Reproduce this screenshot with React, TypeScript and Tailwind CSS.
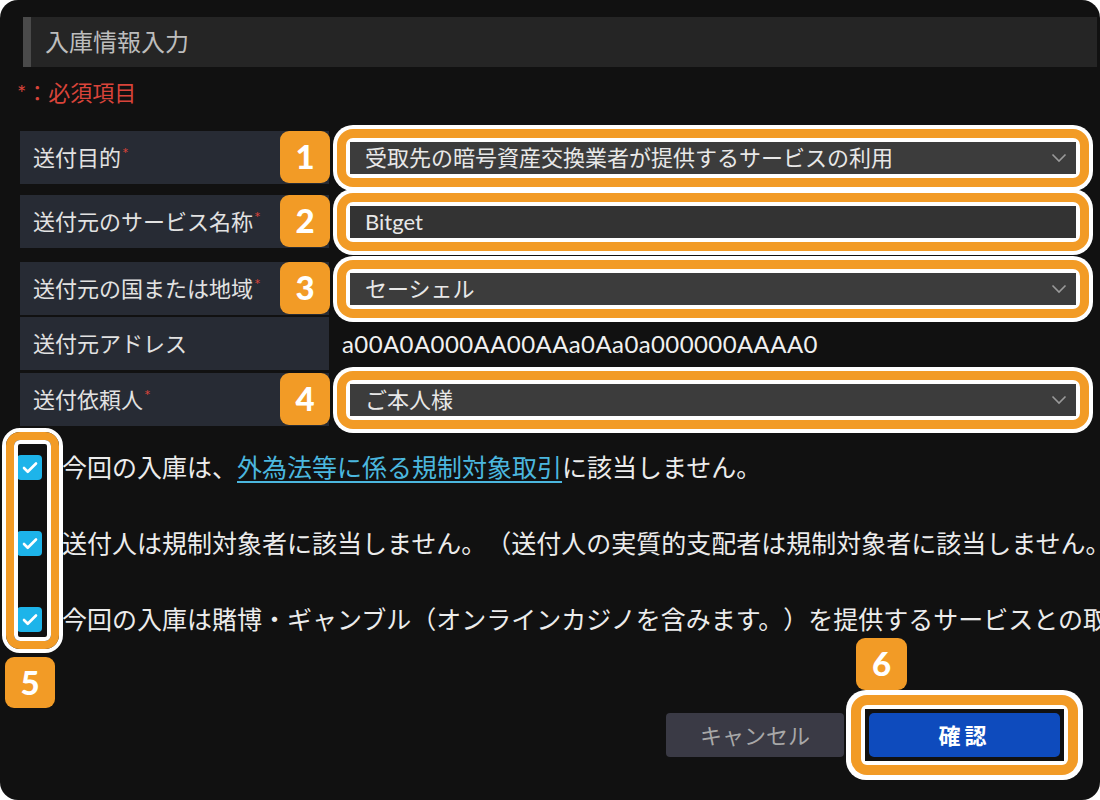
import { Check } from 'lucide-react'
import type { ReactNode } from 'react'

const font = { fontFamily: 'Lato, "Noto Sans CJK JP", sans-serif' }

// orange annotation frame: white / orange / white rings
const Highlight = ({ children, className = '' }: { children: ReactNode; className?: string }) => (
  <div className={`rounded-[20px] bg-white p-[4px] ${className}`}>
    <div className="rounded-[16px] bg-[#f29b26] p-[9px]">
      <div className="rounded-[7px] bg-white p-[4px]">{children}</div>
    </div>
  </div>
)

const Badge = ({ n, className = '' }: { n: number; className?: string }) => (
  <div
    className={`absolute flex items-center justify-center rounded-[9px] bg-[#f29b26] text-[33px] font-black text-white ${className}`}
  >
    {n}
  </div>
)

const Chevron = () => (
  <svg width="16" height="10" viewBox="0 0 16 10" className="shrink-0">
    <polyline points="1.5,1.5 8,8 14.5,1.5" fill="none" stroke="#9a9a9a" strokeWidth="1.6" />
  </svg>
)

const Label = ({ text, required = false }: { text: string; required?: boolean }) => (
  <div className="flex h-full w-[309px] shrink-0 items-center bg-[#272b34] pl-[13px] text-[22px] text-[#e2e2e2]">
    {text}
    {required && <span className="-mt-[10px] ml-[1px] text-[16px] text-[#d9443a]">*</span>}
  </div>
)

const Select = ({ value }: { value: string }) => (
  <div className="flex h-[32px] items-center justify-between bg-[#3c3c3c] pl-[15px] pr-[9px] text-[22px] text-[#e8e8e8]">
    <span className="whitespace-nowrap">{value}</span>
    <Chevron />
  </div>
)

const FieldRow = ({
  label,
  n,
  className = '',
  children,
}: {
  label: string
  n: number
  className?: string
  children: ReactNode
}) => (
  <div className={`relative flex h-[53px] items-center ${className}`}>
    <Label text={label} required />
    <Highlight className="ml-[4px] w-[760px]">{children}</Highlight>
    <Badge n={n} className="left-[260px] top-0 h-[52px] w-[50px]" />
  </div>
)

const CheckRow = ({ children }: { children: ReactNode }) => (
  <div className="flex h-[25px] items-center">
    <div className="flex h-[25px] w-[25px] shrink-0 items-center justify-center rounded-[4px] bg-[#1db4ea]">
      <Check size={18} strokeWidth={3.5} color="#fff" />
    </div>
    <p className="ml-[20px] whitespace-nowrap text-[25px] text-[#ececec] [text-spacing-trim:space-all]">{children}</p>
  </div>
)

export default function App() {
  return (
    <div className="h-[800px] w-[1100px] bg-white" style={font}>
      <div className="relative h-full overflow-hidden rounded-[18px] bg-[#111111] pt-[17px]">
        <div className="ml-[23px] mr-[3px] flex h-[50px] items-center border-l-[8px] border-[#4a4a4a] bg-[#252525] pl-[14px] text-[24px] text-[#bdbdbd]">
          入庫情報入力
        </div>
        <div className="mt-[11px] pl-[17px] text-[22px] leading-[30px] text-[#d9443a]">*：必須項目</div>

        <div className="mt-[23px] pl-[20px]">
          <FieldRow label="送付目的" n={1}>
            <Select value="受取先の暗号資産交換業者が提供するサービスの利用" />
          </FieldRow>
          <FieldRow label="送付元のサービス名称" n={2} className="mt-[11px]">
            <div className="flex h-[32px] items-center bg-[#333333] pl-[15px] text-[22px] text-[#e8e8e8]">Bitget</div>
          </FieldRow>
          <FieldRow label="送付元の国または地域" n={3} className="mt-[14px]">
            <Select value="セーシェル" />
          </FieldRow>
          <div className="mt-[2px] flex h-[53px] items-center">
            <Label text="送付元アドレス" />
            <span className="ml-[13px] text-[24px] tracking-[0.4px] text-[#f0f0f0]">
              a00A0A000AA00AAa0Aa0a000000AAAA0
            </span>
          </div>
          <FieldRow label="送付依頼人" n={4} className="mt-[3px]">
            <Select value="ご本人様" />
          </FieldRow>
        </div>

        <div className="mt-[29px] flex flex-col gap-[51px] pl-[17px]">
          <CheckRow>
            今回の入庫は、
            <a className="text-[#4bb7df] underline underline-offset-4">外為法等に係る規制対象取引</a>
            に該当しません。
          </CheckRow>
          <CheckRow>送付人は規制対象者に該当しません。（送付人の実質的支配者は規制対象者に該当しません。）</CheckRow>
          <CheckRow>今回の入庫は賭博・ギャンブル（オンラインカジノを含みます。）を提供するサービスとの取引ではありません。</CheckRow>
        </div>

        {/* frame around the checkboxes */}
        <div className="absolute left-[2px] top-[428px] h-[225px] w-[61px] rounded-[18px] border-[4px] border-white">
          <div className="h-full w-full rounded-[14px] border-[8px] border-[#f29b26]">
            <div className="h-full w-full rounded-[6px] border-[4px] border-white" />
          </div>
        </div>
        <Badge n={5} className="left-[5px] top-[657px] h-[51px] w-[50px]" />

        <div className="mt-[58px] flex items-center justify-end pr-[17px]">
          <button className="flex h-[44px] w-[178px] items-center justify-center rounded-[4px] bg-[#3a3a45] text-[22px] text-[#a8a8a8]">
            キャンセル
          </button>
          <div className="ml-[2px] rounded-[20px] bg-white p-[5px]">
            <div className="rounded-[16px] bg-[#f29b26] p-[10px]">
              <div className="rounded-[6px] bg-white p-[4px]">
                <div className="bg-[#111111] p-[4px]">
                  <button className="flex h-[44px] w-[191px] items-center justify-center rounded-[5px] bg-[#0e4bbd] text-[22px] font-bold tracking-[4px] text-white">
                    確認
                  </button>
                </div>
              </div>
            </div>
          </div>
        </div>
        <Badge n={6} className="left-[856px] top-[638px] h-[52px] w-[51px]" />
      </div>
    </div>
  )
}
